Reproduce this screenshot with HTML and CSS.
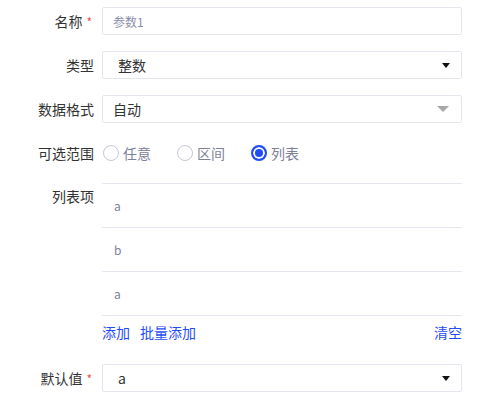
FILE: index.html
```html
<!DOCTYPE html>
<html lang="zh">
<head>
<meta charset="utf-8">
<link rel="stylesheet" href="styles.css">
</head>
<body>
<form class="form">
  <div class="row">
    <label class="label">名称<span class="req">*</span></label>
    <div class="input"><span class="placeholder">参数1</span></div>
  </div>
  <div class="row">
    <label class="label">类型</label>
    <div class="input select"><span class="value indent">整数</span><span class="caret"></span></div>
  </div>
  <div class="row">
    <label class="label">数据格式</label>
    <div class="input select"><span class="value">自动</span><span class="caret caret-disabled"></span></div>
  </div>
  <div class="row">
    <label class="label">可选范围</label>
    <div class="radios">
      <span class="radio"><span class="dot"></span>任意</span>
      <span class="radio"><span class="dot"></span>区间</span>
      <span class="radio checked"><span class="dot"></span>列表</span>
    </div>
  </div>
  <div class="row row-top">
    <label class="label label-list">列表项</label>
    <div class="list-wrap">
      <ul class="list">
        <li>a</li>
        <li>b</li>
        <li>a</li>
      </ul>
      <div class="actions">
        <span class="link">添加</span>
        <span class="link">批量添加</span>
        <span class="link push">清空</span>
      </div>
    </div>
  </div>
  <div class="row">
    <label class="label">默认值<span class="req">*</span></label>
    <div class="input select"><span class="value indent">a</span><span class="caret"></span></div>
  </div>
</form>
</body>
</html>
```
FILE: styles.css
```css
* { box-sizing: border-box; }
html, body { margin: 0; padding: 0; background: #fff; }
body {
  font-family: "Noto Sans CJK SC", "Noto Sans", sans-serif;
  font-size: 14px;
  color: #333;
}
.form {
  padding-top: 7px;
  display: flex;
  flex-direction: column;
  gap: 16px;
}
.row {
  display: grid;
  grid-template-columns: 94px 360px;
  column-gap: 8px;
  align-items: center;
}
.row-top { align-items: start; }
.label {
  text-align: right;
  color: #333;
  font-size: 14px;
  line-height: 20px;
  white-space: nowrap;
}
.req {
  color: #f0504a;
  font-size: 12px;
  margin-left: 4px;
  margin-right: 2px;
}
.input {
  height: 28px;
  border: 1px solid #e4e6ed;
  border-radius: 2px;
  display: flex;
  align-items: center;
  padding: 0 10px;
  position: relative;
}
.placeholder {
  font-size: 12px;
  color: #8a90a8;
}
.value { color: #333; font-size: 14px; }
.value.indent { padding-left: 5px; }
.caret {
  margin-left: auto;
  margin-right: 1px;
  width: 0;
  height: 0;
  border-left: 4px solid transparent;
  border-right: 4px solid transparent;
  border-top: 5px solid #111;
}
.caret-disabled {
  margin-right: 2px;
  border-left-width: 6px;
  border-right-width: 6px;
  border-top: 6px solid #a8a8a8;
}
.radios {
  height: 28px;
  display: flex;
  align-items: center;
  gap: 25px;
}
.radio {
  display: inline-flex;
  align-items: center;
  gap: 4px;
  color: #7c8199;
  font-size: 14px;
}
.dot {
  width: 16px;
  height: 16px;
  border-radius: 50%;
  border: 1px solid #c4c7d6;
  background: #fff;
  margin-left: 1px;
}
.radio.checked .dot {
  border: 2px solid #1f4dfa;
  box-shadow: inset 0 0 0 2px #fff;
  background: #1f4dfa;
}
.label-list { margin-top: 3px; }
.list {
  list-style: none;
  margin: 0;
  padding: 0;
  border-bottom: 1px solid #e4e6ed;
}
.list li {
  height: 44px;
  border-top: 1px solid #e4e6ed;
  display: flex;
  align-items: center;
  padding-left: 12px;
  font-size: 12px;
  color: #7c8199;
}
.actions {
  height: 32px;
  display: flex;
  align-items: center;
  gap: 10px;
}
.link {
  color: #1f4dfa;
  font-size: 14px;
}
.push { margin-left: auto; }
```
